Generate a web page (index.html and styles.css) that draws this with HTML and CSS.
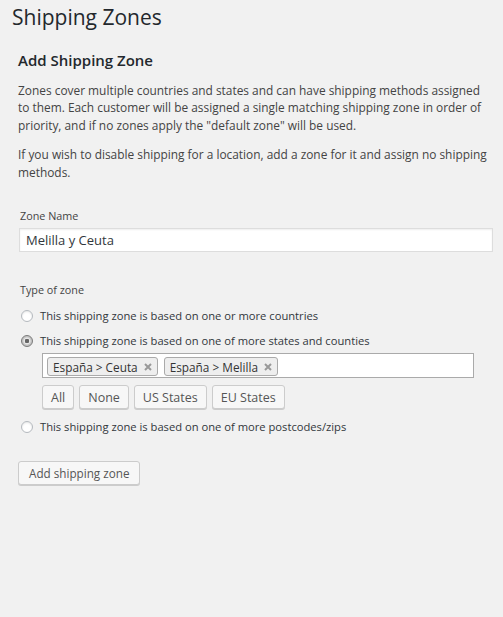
FILE: index.html
```html
<!DOCTYPE html>
<html>
    <head>
        <title>Shipping Zones</title>
        <link rel="stylesheet" href="styles.css">
    </head>
    <body>
        <div class="wrap">
            <h2 class="page-title">Shipping Zones</h2>

            <div class="zone-form">
                <h3>Add Shipping Zone</h3>
                <p>Zones cover multiple countries and states and can have shipping methods assigned to them. Each customer will be assigned a single matching shipping zone in order of priority, and if no zones apply the "default zone" will be used.</p>
                <p>If you wish to disable shipping for a location, add a zone for it and assign no shipping methods.</p>

                <div class="field">
                    <label class="field-label" for="zone_name">Zone Name</label>
                    <input type="text" class="txt-input" id="zone_name" value="Melilla y Ceuta">
                </div>

                <div class="field type-field">
                    <span class="field-label">Type of zone</span>

                    <label class="radio-row">
                        <span class="radio"></span>
                        This shipping zone is based on one or more countries
                    </label>

                    <label class="radio-row">
                        <span class="radio checked"></span>
                        This shipping zone is based on one of more states and counties
                    </label>

                    <div class="states">
                        <div class="chosen">
                            <span class="token">España &gt; Ceuta
                                <svg class="x" width="8" height="8" viewBox="0 0 8 8"><path d="M1 1L7 7M7 1L1 7"/></svg>
                            </span>
                            <span class="token">España &gt; Melilla
                                <svg class="x" width="8" height="8" viewBox="0 0 8 8"><path d="M1 1L7 7M7 1L1 7"/></svg>
                            </span>
                        </div>
                        <div class="quick">
                            <button class="button small">All</button>
                            <button class="button small">None</button>
                            <button class="button small">US States</button>
                            <button class="button small">EU States</button>
                        </div>
                    </div>

                    <label class="radio-row">
                        <span class="radio"></span>
                        This shipping zone is based on one of more postcodes/zips
                    </label>
                </div>

                <button class="button submit">Add shipping zone</button>
            </div>
        </div>
    </body>
</html>
```

FILE: styles.css
```css
html, body{
    margin: 0;
    height: 100%;
}

body{
    background-color: #f1f1f1;
    color: #444;
    font-family: 'Open Sans', 'Noto Sans', sans-serif;
    font-size: 11.9px;
}

.wrap{
    padding: 3px 10px 0 12px;
}

.page-title{
    margin: 0;
    font-size: 21px;
    font-weight: 400;
    line-height: 29px;
    color: #23282d;
}

.zone-form{
    padding: 0 0 0 6px;
}

h3{
    margin: 18px 0 0 0;
    font-size: 15px;
    font-weight: 600;
    line-height: 20px;
    color: #23282d;
}

p{
    margin: 11.7px 0 0 0;
    line-height: 17.6px;
}

.field{
    margin-top: 27px;
}

.field-label{
    display: block;
    padding-left: 2px;
    font-size: 10.8px;
    line-height: 15px;
    margin-bottom: 5px;
}

.txt-input{
    display: block;
    box-sizing: border-box;
    width: calc(100% - 1px);
    height: 24px;
    margin: 0 0 0 1px;
    padding: 0 6px;
    border: 1px solid #ddd;
    background-color: #fff;
    box-shadow: inset 0 1px 2px rgba(0, 0, 0, 0.07);
    font-family: inherit;
    font-size: 13px;
    color: #32373c;
}

.type-field{
    margin-top: 30px;
}

.type-field .field-label{
    margin-bottom: 6px;
}

.radio-row{
    display: flex;
    align-items: center;
    gap: 7px;
    height: 25px;
    font-size: 11.2px;
    color: #32373c;
}

.radio{
    box-sizing: border-box;
    width: 12px;
    height: 12px;
    margin-left: 3px;
    border-radius: 50%;
    border: 1px solid #b4b9be;
    background-color: #fff;
    box-shadow: inset 0 1px 2px rgba(0, 0, 0, 0.1);
}

.radio.checked{
    border-color: #7a7a7a;
    background: radial-gradient(circle, #666 0 2px, #e6e6e6 2.5px 3px, #c4c4c4 4px);
    box-shadow: none;
}

.states{
    margin: 0 0 5px 24px;
}

.chosen{
    display: flex;
    gap: 6px;
    box-sizing: border-box;
    width: 432px;
    height: 25px;
    padding: 3px 4px;
    border: 1px solid #aaa;
    background-color: #fff;
}

.token{
    display: flex;
    align-items: center;
    gap: 6px;
    padding: 0 5px;
    height: 17px;
    border: 1px solid #aaa;
    border-radius: 3px;
    background-color: #eee;
    font-size: 11.8px;
    color: #333;
}

.token .x{
    stroke: #999;
    stroke-width: 2;
}

.quick{
    display: flex;
    gap: 5px;
    margin-top: 7px;
}

.button{
    box-sizing: border-box;
    height: 24px;
    padding: 0 8px;
    border: 1px solid #ccc;
    border-radius: 3px;
    background-color: #f7f7f7;
    box-shadow: 0 1px 0 #ccc;
    font-family: inherit;
    font-size: 12.5px;
    color: #555;
}

.submit{
    margin-top: 22px;
    padding: 0 10px;
    font-size: 11.7px;
}
```
